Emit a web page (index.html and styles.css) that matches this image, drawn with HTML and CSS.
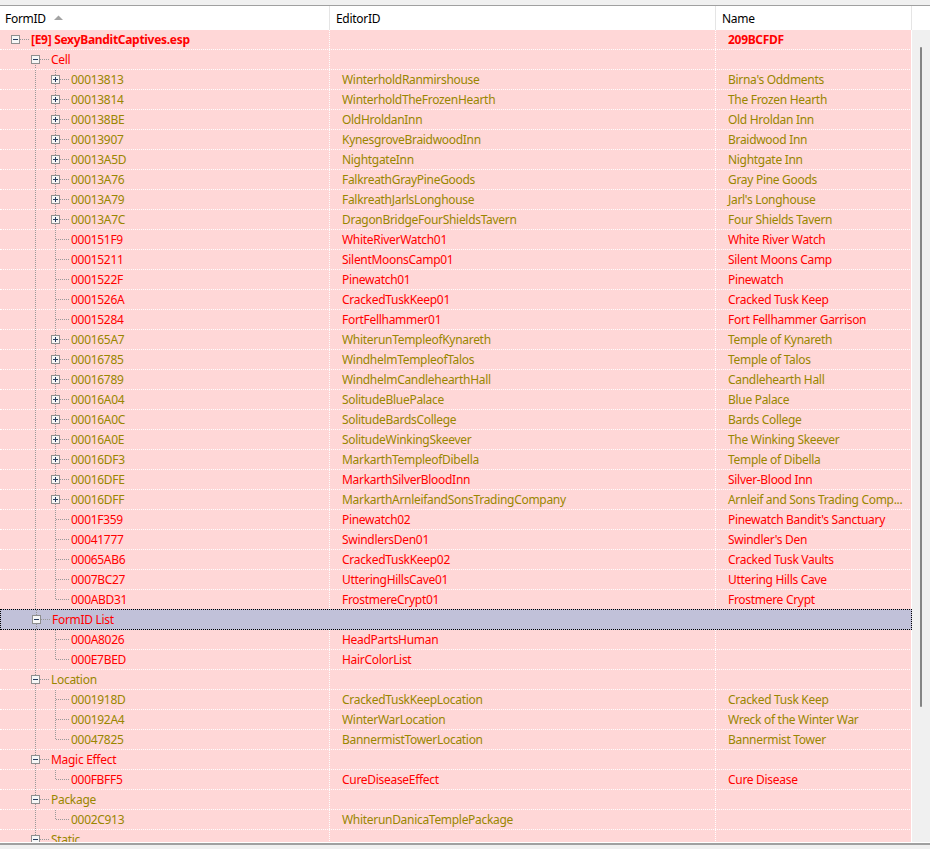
FILE: index.html
```html
<!DOCTYPE html>
<html>
<head>
<meta charset="utf-8">
<link rel="stylesheet" href="styles.css">
</head>
<body>
<svg class="defs" width="0" height="0">
  <symbol id="minus" viewBox="0 0 9 9">
    <rect x="0.5" y="0.5" width="8" height="8" fill="#f6f6f6" stroke="#8e8e8e"/>
    <path d="M2 4.5h5" stroke="#243a5e" stroke-width="1"/>
  </symbol>
  <symbol id="plus" viewBox="0 0 9 9">
    <rect x="0.5" y="0.5" width="8" height="8" fill="#f6f6f6" stroke="#8e8e8e"/>
    <path d="M2 4.5h5M4.5 2v5" stroke="#243a5e" stroke-width="1"/>
  </symbol>
</svg>
<div class="top"></div>
<div class="hdr">
  <div class="h h1">FormID<svg class="sort" width="9" height="5" viewBox="0 0 9 5"><polygon points="0,5 4.5,0.5 9,5" fill="#a3a3a3"/></svg></div>
  <div class="h h2">EditorID</div>
  <div class="h h3">Name</div>
  <div class="hrest"></div>
</div>
<div class="view">
  <div class="rows">
    <div class="row r"><div class="c1"><span class="node none"><svg class="btn"><use href="#minus"/></svg></span><span class="t b">[E9] SexyBanditCaptives.esp</span></div><div class="c2"></div><div class="c3 b">209BCFDF</div></div>
    <div class="row r"><div class="c1"><span class="slot"></span><span class="node first"><svg class="btn"><use href="#minus"/></svg></span><span class="t">Cell</span></div><div class="c2"></div><div class="c3"></div></div>

    <div class="row o"><div class="c1"><span class="slot"></span><span class="slot pipe"></span><span class="node mid"><svg class="btn"><use href="#plus"/></svg></span><span class="t">00013813</span></div><div class="c2">WinterholdRanmirshouse</div><div class="c3">Birna's Oddments</div></div>
    <div class="row o"><div class="c1"><span class="slot"></span><span class="slot pipe"></span><span class="node mid"><svg class="btn"><use href="#plus"/></svg></span><span class="t">00013814</span></div><div class="c2">WinterholdTheFrozenHearth</div><div class="c3">The Frozen Hearth</div></div>
    <div class="row o"><div class="c1"><span class="slot"></span><span class="slot pipe"></span><span class="node mid"><svg class="btn"><use href="#plus"/></svg></span><span class="t">000138BE</span></div><div class="c2">OldHroldanInn</div><div class="c3">Old Hroldan Inn</div></div>
    <div class="row o"><div class="c1"><span class="slot"></span><span class="slot pipe"></span><span class="node mid"><svg class="btn"><use href="#plus"/></svg></span><span class="t">00013907</span></div><div class="c2">KynesgroveBraidwoodInn</div><div class="c3">Braidwood Inn</div></div>
    <div class="row o"><div class="c1"><span class="slot"></span><span class="slot pipe"></span><span class="node mid"><svg class="btn"><use href="#plus"/></svg></span><span class="t">00013A5D</span></div><div class="c2">NightgateInn</div><div class="c3">Nightgate Inn</div></div>
    <div class="row o"><div class="c1"><span class="slot"></span><span class="slot pipe"></span><span class="node mid"><svg class="btn"><use href="#plus"/></svg></span><span class="t">00013A76</span></div><div class="c2">FalkreathGrayPineGoods</div><div class="c3">Gray Pine Goods</div></div>
    <div class="row o"><div class="c1"><span class="slot"></span><span class="slot pipe"></span><span class="node mid"><svg class="btn"><use href="#plus"/></svg></span><span class="t">00013A79</span></div><div class="c2">FalkreathJarlsLonghouse</div><div class="c3">Jarl's Longhouse</div></div>
    <div class="row o"><div class="c1"><span class="slot"></span><span class="slot pipe"></span><span class="node mid"><svg class="btn"><use href="#plus"/></svg></span><span class="t">00013A7C</span></div><div class="c2">DragonBridgeFourShieldsTavern</div><div class="c3">Four Shields Tavern</div></div>
    <div class="row r"><div class="c1"><span class="slot"></span><span class="slot pipe"></span><span class="node mid"></span><span class="t">000151F9</span></div><div class="c2">WhiteRiverWatch01</div><div class="c3">White River Watch</div></div>
    <div class="row r"><div class="c1"><span class="slot"></span><span class="slot pipe"></span><span class="node mid"></span><span class="t">00015211</span></div><div class="c2">SilentMoonsCamp01</div><div class="c3">Silent Moons Camp</div></div>
    <div class="row r"><div class="c1"><span class="slot"></span><span class="slot pipe"></span><span class="node mid"></span><span class="t">0001522F</span></div><div class="c2">Pinewatch01</div><div class="c3">Pinewatch</div></div>
    <div class="row r"><div class="c1"><span class="slot"></span><span class="slot pipe"></span><span class="node mid"></span><span class="t">0001526A</span></div><div class="c2">CrackedTuskKeep01</div><div class="c3">Cracked Tusk Keep</div></div>
    <div class="row r"><div class="c1"><span class="slot"></span><span class="slot pipe"></span><span class="node mid"></span><span class="t">00015284</span></div><div class="c2">FortFellhammer01</div><div class="c3">Fort Fellhammer Garrison</div></div>
    <div class="row o"><div class="c1"><span class="slot"></span><span class="slot pipe"></span><span class="node mid"><svg class="btn"><use href="#plus"/></svg></span><span class="t">000165A7</span></div><div class="c2">WhiterunTempleofKynareth</div><div class="c3">Temple of Kynareth</div></div>
    <div class="row o"><div class="c1"><span class="slot"></span><span class="slot pipe"></span><span class="node mid"><svg class="btn"><use href="#plus"/></svg></span><span class="t">00016785</span></div><div class="c2">WindhelmTempleofTalos</div><div class="c3">Temple of Talos</div></div>
    <div class="row o"><div class="c1"><span class="slot"></span><span class="slot pipe"></span><span class="node mid"><svg class="btn"><use href="#plus"/></svg></span><span class="t">00016789</span></div><div class="c2">WindhelmCandlehearthHall</div><div class="c3">Candlehearth Hall</div></div>
    <div class="row o"><div class="c1"><span class="slot"></span><span class="slot pipe"></span><span class="node mid"><svg class="btn"><use href="#plus"/></svg></span><span class="t">00016A04</span></div><div class="c2">SolitudeBluePalace</div><div class="c3">Blue Palace</div></div>
    <div class="row o"><div class="c1"><span class="slot"></span><span class="slot pipe"></span><span class="node mid"><svg class="btn"><use href="#plus"/></svg></span><span class="t">00016A0C</span></div><div class="c2">SolitudeBardsCollege</div><div class="c3">Bards College</div></div>
    <div class="row o"><div class="c1"><span class="slot"></span><span class="slot pipe"></span><span class="node mid"><svg class="btn"><use href="#plus"/></svg></span><span class="t">00016A0E</span></div><div class="c2">SolitudeWinkingSkeever</div><div class="c3">The Winking Skeever</div></div>
    <div class="row o"><div class="c1"><span class="slot"></span><span class="slot pipe"></span><span class="node mid"><svg class="btn"><use href="#plus"/></svg></span><span class="t">00016DF3</span></div><div class="c2">MarkarthTempleofDibella</div><div class="c3">Temple of Dibella</div></div>
    <div class="row o"><div class="c1"><span class="slot"></span><span class="slot pipe"></span><span class="node mid"><svg class="btn"><use href="#plus"/></svg></span><span class="t">00016DFE</span></div><div class="c2 r">MarkarthSilverBloodInn</div><div class="c3 r">Silver-Blood Inn</div></div>
    <div class="row o"><div class="c1"><span class="slot"></span><span class="slot pipe"></span><span class="node mid"><svg class="btn"><use href="#plus"/></svg></span><span class="t">00016DFF</span></div><div class="c2">MarkarthArnleifandSonsTradingCompany</div><div class="c3">Arnleif and Sons Trading Comp...</div></div>
    <div class="row r"><div class="c1"><span class="slot"></span><span class="slot pipe"></span><span class="node mid"></span><span class="t">0001F359</span></div><div class="c2">Pinewatch02</div><div class="c3">Pinewatch Bandit's Sanctuary</div></div>
    <div class="row r"><div class="c1"><span class="slot"></span><span class="slot pipe"></span><span class="node mid"></span><span class="t">00041777</span></div><div class="c2">SwindlersDen01</div><div class="c3">Swindler's Den</div></div>
    <div class="row r"><div class="c1"><span class="slot"></span><span class="slot pipe"></span><span class="node mid"></span><span class="t">00065AB6</span></div><div class="c2">CrackedTuskKeep02</div><div class="c3">Cracked Tusk Vaults</div></div>
    <div class="row r"><div class="c1"><span class="slot"></span><span class="slot pipe"></span><span class="node mid"></span><span class="t">0007BC27</span></div><div class="c2">UtteringHillsCave01</div><div class="c3">Uttering Hills Cave</div></div>
    <div class="row r"><div class="c1"><span class="slot"></span><span class="slot pipe"></span><span class="node last"></span><span class="t">000ABD31</span></div><div class="c2">FrostmereCrypt01</div><div class="c3">Frostmere Crypt</div></div>

    <div class="row r sel"><div class="c1"><span class="slot"></span><span class="node mid"><svg class="btn"><use href="#minus"/></svg></span><span class="t">FormID List</span></div><div class="c2"></div><div class="c3"></div></div>
    <div class="row r"><div class="c1"><span class="slot"></span><span class="slot pipe"></span><span class="node mid"></span><span class="t">000A8026</span></div><div class="c2">HeadPartsHuman</div><div class="c3"></div></div>
    <div class="row r"><div class="c1"><span class="slot"></span><span class="slot pipe"></span><span class="node last"></span><span class="t">000E7BED</span></div><div class="c2">HairColorList</div><div class="c3"></div></div>

    <div class="row o"><div class="c1"><span class="slot"></span><span class="node mid"><svg class="btn"><use href="#minus"/></svg></span><span class="t">Location</span></div><div class="c2"></div><div class="c3"></div></div>
    <div class="row o"><div class="c1"><span class="slot"></span><span class="slot pipe"></span><span class="node mid"></span><span class="t">0001918D</span></div><div class="c2">CrackedTuskKeepLocation</div><div class="c3">Cracked Tusk Keep</div></div>
    <div class="row o"><div class="c1"><span class="slot"></span><span class="slot pipe"></span><span class="node mid"></span><span class="t">000192A4</span></div><div class="c2">WinterWarLocation</div><div class="c3">Wreck of the Winter War</div></div>
    <div class="row o"><div class="c1"><span class="slot"></span><span class="slot pipe"></span><span class="node last"></span><span class="t">00047825</span></div><div class="c2">BannermistTowerLocation</div><div class="c3">Bannermist Tower</div></div>

    <div class="row r"><div class="c1"><span class="slot"></span><span class="node mid"><svg class="btn"><use href="#minus"/></svg></span><span class="t">Magic Effect</span></div><div class="c2"></div><div class="c3"></div></div>
    <div class="row r"><div class="c1"><span class="slot"></span><span class="slot pipe"></span><span class="node last"></span><span class="t">000FBFF5</span></div><div class="c2">CureDiseaseEffect</div><div class="c3">Cure Disease</div></div>

    <div class="row o"><div class="c1"><span class="slot"></span><span class="node mid"><svg class="btn"><use href="#minus"/></svg></span><span class="t">Package</span></div><div class="c2"></div><div class="c3"></div></div>
    <div class="row o"><div class="c1"><span class="slot"></span><span class="slot pipe"></span><span class="node last"></span><span class="t">0002C913</span></div><div class="c2">WhiterunDanicaTemplePackage</div><div class="c3"></div></div>

    <div class="row o"><div class="c1"><span class="slot"></span><span class="node mid"><svg class="btn"><use href="#minus"/></svg></span><span class="t">Static</span></div><div class="c2"></div><div class="c3"></div></div>
  </div>
  <div class="vscroll"><div class="thumb"></div></div>
</div>
<div class="bottom"></div>
</body>
</html>
```

FILE: styles.css
```css
html, body {
  margin: 0;
  padding: 0;
}
body {
  width: 930px;
  height: 849px;
  overflow: hidden;
  background: #f0f0f0;
  font-family: "Noto Sans", "Liberation Sans", sans-serif;
  font-size: 12px;
  letter-spacing: -0.3px;
}
.defs {
  display: block;
  width: 0;
  height: 0;
  overflow: hidden;
}
.top {
  height: 5px;
  border-bottom: 1px solid #a0a0a0;
  background: #f0f0f0;
}
.hdr {
  display: flex;
  height: 24px;
  background: #fff;
  line-height: 22px;
  color: #000;
}
.h {
  box-sizing: border-box;
  border-right: 1px solid #e5e5e5;
  display: flex;
  align-items: center;
  padding-top: 2px;
  white-space: nowrap;
}
.h1 { width: 330px; padding-left: 5px; }
.h2 { width: 386px; padding-left: 6px; }
.h3 { width: 196px; padding-left: 6px; }
.hrest { flex: 1; }
.sort {
  margin-left: 8px;
  margin-top: -3px;
}
.view {
  display: flex;
  height: 812px;
}
.rows {
  width: 912px;
  flex: none;
  overflow: hidden;
  background: #ffd7d7;
}
.row {
  display: flex;
  height: 20px;
  box-sizing: border-box;
  border-bottom: 1px dotted #fff;
  line-height: 19px;
  white-space: nowrap;
}
.c1, .c2, .c3 {
  box-sizing: border-box;
  overflow: hidden;
}
.c1 {
  width: 330px;
  display: flex;
  border-right: 1px dotted #fff;
}
.c2 {
  width: 386px;
  padding-left: 12px;
  border-right: 1px dotted #fff;
}
.c3 {
  width: 196px;
  padding-left: 12px;
  border-right: 1px solid #fff;
}
.r { color: #ff0000; }
.o { color: #998600; }
.b { font-weight: 700; }
.slot {
  width: 20px;
  flex: none;
}
.pipe {
  background: repeating-linear-gradient(to bottom, #999 0 1px, transparent 1px 2px) 15px 0 / 1px 19px no-repeat;
}
.node {
  width: 29px;
  flex: none;
  --vy: 0px;
  --vh: 0px;
  background-image:
    repeating-linear-gradient(to right, #999 0 1px, transparent 1px 2px),
    repeating-linear-gradient(to bottom, #999 0 1px, transparent 1px 2px);
  background-repeat: no-repeat;
  background-position: 16px 9px, 15px var(--vy);
  background-size: 13px 1px, 1px var(--vh);
}
.node.mid { --vy: 0px; --vh: 19px; }
.node.first { --vy: 9px; --vh: 10px; }
.node.last { --vy: 0px; --vh: 10px; }
.btn {
  display: block;
  width: 9px;
  height: 9px;
  margin: 5px 0 0 11px;
}
.t {
  margin-left: 2px;
}
.row.sel {
  background: #c1c1d9;
  border: 1px dotted #000;
  height: 21px;
  margin-top: -1px;
}
.sel .c1 { width: 329px; border-right-color: transparent; }
.sel .c2 { border-right-color: transparent; }
.sel .c3 { width: 195px; border-right: none; }
.vscroll {
  flex: 1;
  background: #f0f0f0;
  padding: 17px 0 0 8px;
}
.thumb {
  width: 2px;
  height: 660px;
  background: #858585;
  border-radius: 1px;
}
.bottom {
  height: 1px;
  background: #fff;
  border-bottom: 2px solid #a0a0a0;
}
```
